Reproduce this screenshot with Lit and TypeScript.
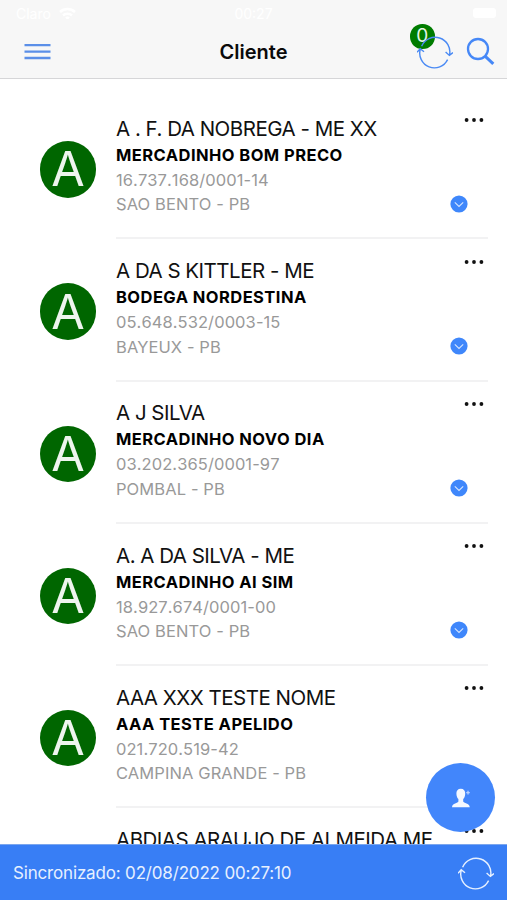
import { LitElement, html, css, svg, nothing } from "lit";
import { customElement, property } from "lit/decorators.js";

interface Client {
  initial: string;
  name: string;
  alias: string;
  doc: string;
  city: string;
  expandable: boolean;
}

const clients: Client[] = [
  { initial: "A", name: "A . F. DA NOBREGA - ME XX", alias: "MERCADINHO BOM PRECO", doc: "16.737.168/0001-14", city: "SAO BENTO - PB", expandable: true },
  { initial: "A", name: "A DA S KITTLER - ME", alias: "BODEGA NORDESTINA", doc: "05.648.532/0003-15", city: "BAYEUX - PB", expandable: true },
  { initial: "A", name: "A J SILVA", alias: "MERCADINHO NOVO DIA", doc: "03.202.365/0001-97", city: "POMBAL - PB", expandable: true },
  { initial: "A", name: "A. A DA SILVA - ME", alias: "MERCADINHO AI SIM", doc: "18.927.674/0001-00", city: "SAO BENTO - PB", expandable: true },
  { initial: "A", name: "AAA XXX TESTE NOME", alias: "AAA TESTE APELIDO", doc: "021.720.519-42", city: "CAMPINA GRANDE - PB", expandable: false },
  { initial: "", name: "ABDIAS ARAUJO DE ALMEIDA ME", alias: "", doc: "", city: "", expandable: false },
];

const syncPaths = svg`
  <path d="M4.600 12.300A14.700 14.700 0 0 1 32.500 21.200M28.600 18l3.800 3.400L36 18.600"/>
  <path d="M30.600 25.600A14.700 14.700 0 0 1 3.300 15M0 18.200l3.200-3.500L7 17.800"/>`;

@customElement("client-row")
export class ClientRow extends LitElement {
  @property({ attribute: false }) client!: Client;

  static styles = css`
    :host { display: flex; height: 142.2px; flex: none; padding: 0 19px 0 39.8px; box-sizing: border-box; }
    .avatar { width: 56.4px; height: 56.4px; flex: none; margin: 44px 19.8px 0 0; border-radius: 50%; background: #006600;
      color: #eef5ee; display: flex; align-items: center; justify-content: center; font-size: 48.5px; line-height: 56px; }
    .body { flex: 1; min-width: 0; display: flex; justify-content: space-between; border-bottom: 2px solid #f2f2f3; box-sizing: border-box; }
    .lines { padding-top: 18.800px; white-space: nowrap; }
    .name { font-size: 20.5px; line-height: 26px; height: 26px; color: #111; letter-spacing: -.5px; }
    .alias { font-size: 16.5px; line-height: 26px; height: 26px; font-weight: 700; color: #000; letter-spacing: .45px; }
    .doc, .city { font-size: 16.5px; line-height: 24.5px; height: 24.5px; color: #999; letter-spacing: .1px; }
    .doc { font-kerning: none; letter-spacing: .08px; }
    .side { width: 38px; display: flex; flex-direction: column; justify-content: space-between; padding: 19.500px 0 24.700px; box-sizing: border-box; }
    .dots { width: 20px; height: 6px; margin-left: 14px; display: block; }
    .down { width: 18px; height: 18px; display: block; }
  `;

  render() {
    const c = this.client;
    return html`
      <div class="avatar">${c.initial}</div>
      <div class="body">
        <div class="lines">
          <div class="name">${c.name}</div>
          <div class="alias">${c.alias}</div>
          <div class="doc">${c.doc}</div>
          <div class="city">${c.city}</div>
        </div>
        <div class="side">
          <svg class="dots" viewBox="0 0 20 6" fill="#111"><circle cx="2.6" cy="3" r="1.9"/><circle cx="10" cy="3" r="1.9"/><circle cx="17.4" cy="3" r="1.9"/></svg>
          ${c.expandable
            ? html`<svg class="down" viewBox="0 0 18 18"><circle cx="9" cy="9" r="8.6" fill="#3f87fb"/><path d="M4.8 7.4L9 11.4l4.2-4" fill="none" stroke="#d5e5ff" stroke-width="1.1"/></svg>`
            : nothing}
        </div>
      </div>`;
  }
}

@customElement("app-root")
export class AppRoot extends LitElement {
  static styles = css`
    :host { display: flex; flex-direction: column; position: relative; width: 507px; height: 900px; overflow: hidden; background: #fff;
      font-family: Inter, "Liberation Sans", sans-serif; }
    header { height: 79px; flex: none; box-sizing: border-box; background: #f7f7f7; border-bottom: 1px solid #d6d6d8; }
    .status { height: 26px; display: grid; grid-template-columns: 1fr auto 1fr; align-items: center; padding: 0 11px; color: #fff; font-size: 14px; box-sizing: border-box; }
    .carrier { display: flex; gap: 8px; align-items: center; margin-left: 5px; }
    .wifi { width: 17px; height: 13px; }
    .battery { justify-self: end; width: 23px; height: 10px; border-radius: 3px; background: #fff; }
    .bar { height: 51px; display: grid; grid-template-columns: 1fr auto 1fr; align-items: center; padding: 0 12px; }
    .menu { width: 27px; height: 17px; margin-left: 12px; }
    h1 { margin: 0; font-size: 20px; font-weight: 600; line-height: 26px; color: #0a0a0a; }
    .tools { justify-self: end; display: flex; align-items: center; gap: 13px; }
    .syncbox { position: relative; width: 36px; height: 36px; }
    .badge { position: absolute; left: -7px; top: -9.500px; width: 24.500px; height: 24.500px; border-radius: 50%; background: #007c00; color: #e6f5e6;
      font-size: 19px; line-height: 24.500px; text-align: center; }
    .sync { position: relative; display: block; width: 36px; height: 36px; fill: none; stroke: #4a8af4; stroke-width: 1.4; }
    .search { width: 29px; height: 29px; }
    main { flex: 1; min-height: 0; overflow: hidden; padding-top: 18.200px; display: flex; flex-direction: column; }
    footer { height: 56px; flex: none; box-sizing: border-box; border-top: 1px solid #7ba6ee; background: #387ef5; color: #e6f0ff;
      display: flex; align-items: center; justify-content: space-between; padding: 1px 13px 0; font-size: 17px; letter-spacing: -.17px; }
    footer .sync { stroke: #e6f0ff; }
    .fab { position: absolute; left: 426px; top: 763px; width: 69px; height: 69px; border-radius: 50%; background: #4286fb; display: flex; align-items: center; justify-content: center; }
    .fab svg { width: 20px; height: 20px; }
  `;

  render() {
    return html`
      <header>
        <div class="status">
          <div class="carrier"><span>Claro</span>
            <svg class="wifi" viewBox="0 0 17 13" fill="none" stroke="#fff" stroke-width="2.5"><path d="M1 5a11 11 0 0 1 15 0M4 8.500a6.500 6.500 0 0 1 9 0M7 11.300a2.500 2.500 0 0 1 3 0"/></svg>
          </div>
          <span>00:27</span>
          <span class="battery"></span>
        </div>
        <div class="bar">
          <svg class="menu" viewBox="0 0 27 17" fill="none" stroke="#5b8fe8" stroke-width="2.300"><path d="M.5 2.200h26M.5 8.600h26M.5 15h26"/></svg>
          <h1>Cliente</h1>
          <div class="tools">
            <div class="syncbox">
              <span class="badge">0</span>
              <svg class="sync" viewBox="0 0 36 36">${syncPaths}</svg>
            </div>
            <svg class="search" viewBox="0 0 29 29" fill="none" stroke="#4688f7"><circle cx="12" cy="12" r="10" stroke-width="2.300"/><path d="M19.300 19.300l8 7.600" stroke-width="3"/></svg>
          </div>
        </div>
      </header>
      <main>${clients.map((c) => html`<client-row .client=${c}></client-row>`)}</main>
      <footer>
        <span>Sincronizado: 02/08/2022 00:27:10</span>
        <svg class="sync" viewBox="0 0 36 36">${syncPaths}</svg>
      </footer>
      <div class="fab">
        <svg viewBox="0 0 20 20" fill="#f5f9ff"><path d="M9.800 .8c3 0 4.600 2 4.400 5-.1 2.400-.9 4.300-2 5.300v2.400c.4 1.600 6.300 1.700 6.600 5.700H1c.3-4 6-4.100 6.400-5.700v-2.400c-1.100-1-1.900-2.900-2-5.300C5.200 2.800 6.800.8 9.800.8z"/><path d="M17 2.800v3.600M15.200 4.600h3.600" fill="none" stroke="#b5d0ff" stroke-width="1.300"/></svg>
      </div>`;
  }
}
